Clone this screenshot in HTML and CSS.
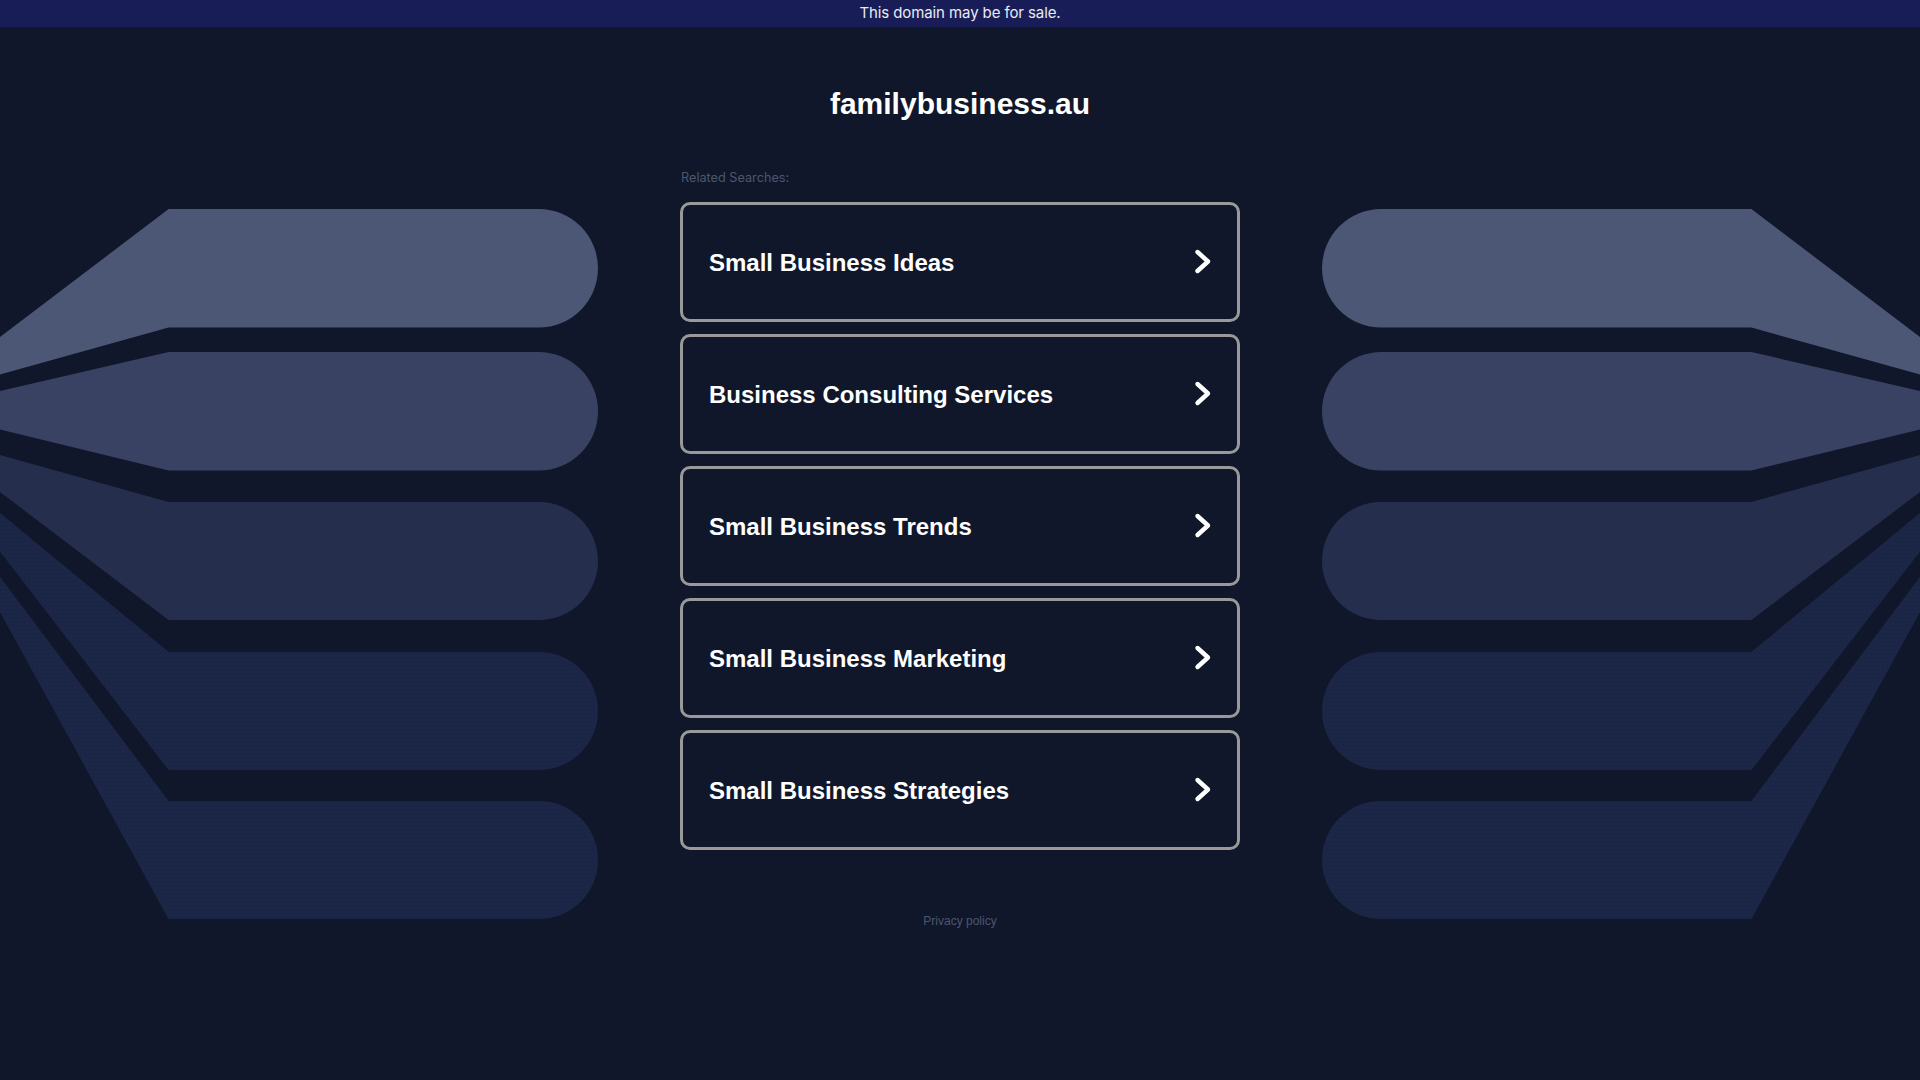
FILE: index.html
```html
<!DOCTYPE html>
<html lang="en">
<head>
<meta charset="utf-8">
<title>familybusiness.au</title>
<link rel="stylesheet" href="styles.css">
</head>
<body>
<svg class="backdrop" width="1920" height="1080" viewBox="0 0 1920 1080" aria-hidden="true">
  <defs>
    <pattern id="dots" width="4" height="4" patternUnits="userSpaceOnUse">
      <rect width="4" height="4" fill="#1c2647"/>
      <rect x="1" y="1" width="1" height="1" fill="#151d3a"/>
    </pattern>
    <g id="bands">
      <path d="M0 337 L168.6 209 L538.75 209 A59.25 59.25 0 0 1 538.75 327.5 L168.6 327.5 L0 374.6 Z" fill="#4c5675"/>
      <path d="M0 391 L168.6 352 L538.75 352 A59.25 59.25 0 0 1 538.75 470.5 L168.6 470.5 L0 429.5 Z" fill="#394262"/>
      <path d="M0 455 L168.6 502 L539 502 A59 59 0 0 1 539 620 L168.6 620 L0 492 Z" fill="#252e4d"/>
      <path d="M0 513 L168.6 652 L539 652 A59 59 0 0 1 539 770 L168.6 770 L0 551.5 Z" fill="url(#dots)"/>
      <path d="M0 577 L168.6 801 L539 801 A59 59 0 0 1 539 919 L168.6 919 L0 612 Z" fill="url(#dots)"/>
    </g>
  </defs>
  <use href="#bands"/>
  <use href="#bands" transform="translate(1920 0) scale(-1 1)"/>
</svg>

<div class="banner">This domain may be for sale.</div>

<main class="content">
  <h1 class="domain">familybusiness.au</h1>
  <section class="related">
    <p class="related-title">Related Searches:</p>
    <ul class="links">
      <li><a class="link" href="#"><span class="link-text">Small Business Ideas</span><svg class="chev" width="20" height="28" viewBox="0 0 20 28"><path d="M4.5 4 L15 13.5 L4.5 23" /></svg></a></li>
      <li><a class="link" href="#"><span class="link-text">Business Consulting Services</span><svg class="chev" width="20" height="28" viewBox="0 0 20 28"><path d="M4.5 4 L15 13.5 L4.5 23" /></svg></a></li>
      <li><a class="link" href="#"><span class="link-text">Small Business Trends</span><svg class="chev" width="20" height="28" viewBox="0 0 20 28"><path d="M4.5 4 L15 13.5 L4.5 23" /></svg></a></li>
      <li><a class="link" href="#"><span class="link-text">Small Business Marketing</span><svg class="chev" width="20" height="28" viewBox="0 0 20 28"><path d="M4.5 4 L15 13.5 L4.5 23" /></svg></a></li>
      <li><a class="link" href="#"><span class="link-text">Small Business Strategies</span><svg class="chev" width="20" height="28" viewBox="0 0 20 28"><path d="M4.5 4 L15 13.5 L4.5 23" /></svg></a></li>
    </ul>
  </section>
  <footer class="footer"><a class="privacy" href="#">Privacy policy</a></footer>
</main>
</body>
</html>
```
FILE: styles.css
```css
html, body {
  margin: 0;
  padding: 0;
}

body {
  position: relative;
  min-height: 100vh;
  background: #10172a;
  overflow: hidden;
  font-family: "Liberation Sans", Arial, sans-serif;
}

.backdrop {
  position: absolute;
  top: 0;
  left: 0;
  z-index: 0;
  display: block;
}

.banner {
  position: relative;
  z-index: 1;
  height: 27px;
  line-height: 26px;
  background: #181d57;
  color: #e9eaf2;
  text-align: center;
  font-family: Inter, "Open Sans", sans-serif;
  font-size: 15px;
  letter-spacing: -0.1px;
}

.content {
  position: relative;
  z-index: 1;
  display: flex;
  flex-direction: column;
  align-items: center;
}

.domain {
  margin: 59px 0 0;
  font-size: 30px;
  line-height: 36px;
  font-weight: 700;
  color: #ffffff;
}

.related {
  width: 560px;
  margin-top: 48px;
}

.related-title {
  margin: 0 0 0 1px;
  font-family: Inter, "Open Sans", sans-serif;
  font-size: 12.7px;
  line-height: 16px;
  color: #4d566f;
}

.links {
  list-style: none;
  margin: 16px 0 0;
  padding: 0;
  display: flex;
  flex-direction: column;
  gap: 12px;
}

.link {
  box-sizing: border-box;
  height: 120px;
  display: flex;
  align-items: center;
  justify-content: space-between;
  padding: 0 24px 0 26px;
  border: 3px solid #999999;
  border-radius: 10px;
  text-decoration: none;
  color: #ffffff;
}

.link-text {
  font-size: 24px;
  font-weight: 700;
  line-height: 28px;
  padding-top: 2px;
}

.chev {
  display: block;
  flex: none;
}

.chev path {
  fill: none;
  stroke: #ffffff;
  stroke-width: 4.4;
  stroke-linecap: round;
  stroke-linejoin: round;
}

.footer {
  margin-top: 62px;
  line-height: 16px;
}

.privacy {
  font-size: 12px;
  color: #4d566f;
  text-decoration: none;
}
```
